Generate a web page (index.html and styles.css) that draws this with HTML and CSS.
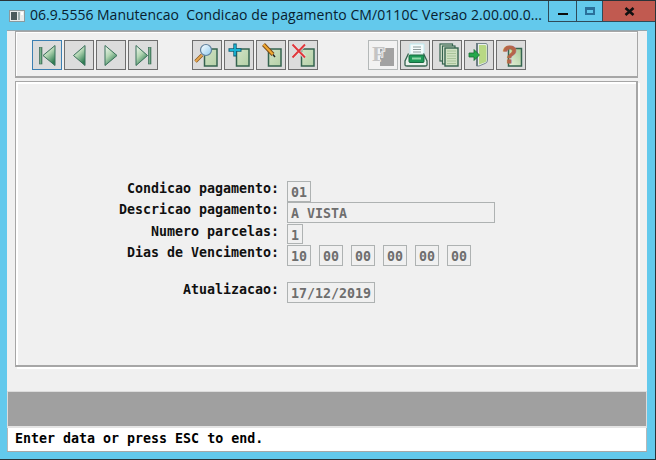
FILE: index.html
```html
<!DOCTYPE html>
<html lang="en">
<head>
  <meta charset="UTF-8" />
  <title>Condicao de pagamento</title>
  <link rel="stylesheet" href="styles.css">
</head>
<body>

<div class="window">

  <div class="titlebar">
    <svg class="app-icon" width="16" height="12" viewBox="0 0 16 12">
      <rect x="0.5" y="0.5" width="15" height="11" fill="#e8ecec" stroke="#8a9a9e"/>
      <rect x="2" y="2" width="6" height="8" fill="#4a5a5c"/>
      <rect x="9" y="2" width="2" height="8" fill="#9fb0b0"/>
      <rect x="12" y="2" width="2" height="3" fill="#fff"/>
    </svg>
    <span class="title-text">06.9.5556 Manutencao&nbsp; <span class="title-rest">Condicao de pagamento CM/0110C Versao 2.00.00.0...</span></span>
    <div class="win-btns">
      <div class="win-btn win-min"><span class="min-glyph"></span></div>
      <div class="win-btn win-max"><span class="max-glyph"></span></div>
      <div class="win-btn win-close">
        <svg width="11" height="9" viewBox="0 0 11 9"><path d="M1.5 1 L9.5 8 M9.5 1 L1.5 8" stroke="#111" stroke-width="2.6"/></svg>
      </div>
    </div>
  </div>

  <div class="client">
    <div class="work">

      <div class="toolbar">
        <div class="btn-group">
          <button class="tool-btn focus">
            <svg width="28" height="28" viewBox="1 1 28 28">
              <defs>
                <linearGradient id="gLeft" x1="0" y1="0" x2="0.6" y2="1">
                  <stop offset="0" stop-color="#f4f8f2"/>
                  <stop offset="0.5" stop-color="#b4d6b4"/>
                  <stop offset="1" stop-color="#2f7d52"/>
                </linearGradient>
                <linearGradient id="gBar" x1="0" y1="0" x2="1" y2="0">
                  <stop offset="0" stop-color="#2b6e4c"/>
                  <stop offset="0.5" stop-color="#8cc09a"/>
                  <stop offset="1" stop-color="#2b6e4c"/>
                </linearGradient>
                <linearGradient id="gSquare" x1="0" y1="0" x2="1" y2="1">
                  <stop offset="0" stop-color="#d2e2c6"/>
                  <stop offset="1" stop-color="#b4d0a6"/>
                </linearGradient>
                <linearGradient id="gLens" x1="0" y1="0" x2="1" y2="1">
                  <stop offset="0" stop-color="#ffffff"/>
                  <stop offset="1" stop-color="#8ecbf0"/>
                </linearGradient>
                <linearGradient id="gHelp" x1="0" y1="1" x2="1" y2="0">
                  <stop offset="0" stop-color="#e8f0dc"/>
                  <stop offset="1" stop-color="#a6cc96"/>
                </linearGradient>
              </defs>
              <rect x="7.5" y="7.5" width="2.5" height="16.5" fill="url(#gBar)" stroke="#3a6a55" stroke-width="0.6"/>
              <path d="M23 5.5 L11 15.5 L23 25.5 Z" fill="url(#gLeft)" stroke="#39705a"/>
            </svg>
          </button>
          <button class="tool-btn">
            <svg width="28" height="28" viewBox="1 1 28 28"><path d="M21 5.5 L9.5 15.5 L21 25.5 Z" fill="url(#gLeft)" stroke="#39705a"/></svg>
          </button>
          <button class="tool-btn">
            <svg width="28" height="28" viewBox="1 1 28 28"><path d="M9 5.5 L21 15.5 L9 25.5 Z" fill="url(#gLeft)" stroke="#39705a"/></svg>
          </button>
          <button class="tool-btn">
            <svg width="28" height="28" viewBox="1 1 28 28">
              <path d="M8 5.5 L19.5 15.5 L8 25.5 Z" fill="url(#gLeft)" stroke="#39705a"/>
              <rect x="20.5" y="7.5" width="2.5" height="16.5" fill="url(#gBar)" stroke="#3a6a55" stroke-width="0.6"/>
            </svg>
          </button>
        </div>

        <div class="btn-group">
          <button class="tool-btn">
            <svg width="28" height="28" viewBox="1 1 28 28">
              <rect x="12.5" y="9" width="12.5" height="17" fill="url(#gSquare)" stroke="#35634f" stroke-width="1.5"/>
              <path d="M10 15 L3.5 21.5" stroke="#8a5a20" stroke-width="3.4"/>
              <path d="M10 15 L3.5 21.5" stroke="#e8a850" stroke-width="1.8"/>
              <circle cx="14" cy="10" r="5.5" fill="url(#gLens)" stroke="#5f7f9c" stroke-width="1.2"/>
            </svg>
          </button>
          <button class="tool-btn">
            <svg width="28" height="28" viewBox="1 1 28 28">
              <rect x="12.5" y="9" width="12.5" height="17" fill="url(#gSquare)" stroke="#35634f" stroke-width="1.5"/>
              <path d="M11 3.5 V16.5 M4.5 10 H17.5" stroke="#0e5f76" stroke-width="3.4"/>
              <path d="M11 4.5 V15.5 M5.5 10 H16.5" stroke="#18b4d4" stroke-width="1.8"/>
            </svg>
          </button>
          <button class="tool-btn">
            <svg width="28" height="28" viewBox="1 1 28 28">
              <rect x="12.5" y="9" width="12.5" height="17" fill="url(#gSquare)" stroke="#35634f" stroke-width="1.5"/>
              <path d="M7.5 4.5 L17 14.5" stroke="#7a4a18" stroke-width="4"/>
              <path d="M7.5 4.5 L17 14.5" stroke="#f0a830" stroke-width="2.2"/>
              <path d="M17 14.5 L19 17" stroke="#222" stroke-width="1.4"/>
            </svg>
          </button>
          <button class="tool-btn">
            <svg width="28" height="28" viewBox="1 1 28 28">
              <rect x="13.5" y="9" width="12.5" height="17" fill="url(#gSquare)" stroke="#35634f" stroke-width="1.5"/>
              <path d="M4.5 4.5 L17 17.5 M17 4.5 L4.5 17.5" stroke="#e8e8e8" stroke-width="3.4"/>
              <path d="M4.5 4.5 L17 17.5 M17 4.5 L4.5 17.5" stroke="#e0383c" stroke-width="2"/>
            </svg>
          </button>
        </div>

        <div class="btn-group">
          <button class="tool-btn disabled">
            <svg width="28" height="28" viewBox="1 1 28 28">
              <rect x="12" y="8" width="14" height="18" fill="#a2a2a2"/>
              <text class="icon-f" x="4" y="21">F</text>
            </svg>
          </button>
          <button class="tool-btn">
            <svg width="28" height="28" viewBox="1 1 28 28">
              <path d="M10 4 H24 V14 H10 Z" fill="#f4fbfb" stroke="#bfeaf0"/>
              <path d="M13 7 H21 M13 9.5 H21 M13 12 H21" stroke="#8a9a9a"/>
              <path d="M8.5 13.5 L5 21 V25 Q5 26 7 26 H25 Q27 26 27 25 V21 L23.5 13.5" fill="#e8f0ea" stroke="#35634f" stroke-width="1.3"/>
              <rect x="9" y="15" width="15" height="7.5" rx="1" fill="#1f9a58" stroke="#176a40"/>
              <rect x="12" y="17.5" width="9" height="2" fill="#8fd8a8"/>
            </svg>
          </button>
          <button class="tool-btn">
            <svg width="28" height="28" viewBox="1 1 28 28">
              <rect x="8" y="4" width="12.5" height="17" fill="#dbe6d2" stroke="#35634f" stroke-width="1.2"/>
              <rect x="10.5" y="6" width="12.5" height="18" fill="#dbe6d2" stroke="#35634f" stroke-width="1.2"/>
              <rect x="13" y="8" width="13" height="18" fill="#cfe0c2" stroke="#35634f" stroke-width="1.4"/>
              <path d="M15 11 H24 M15 13.5 H24 M15 16 H24 M15 18.5 H24 M15 21 H24 M15 23.5 H24" stroke="#a8c49a"/>
            </svg>
          </button>
          <button class="tool-btn">
            <svg width="28" height="28" viewBox="1 1 28 28">
              <path d="M12.5 3.5 H22 Q23.5 3.5 23.5 6 V20 Q23.5 23 21 23.5 L15 26 H12.5 Z" fill="#e8eeee" stroke="#7a8a8e"/>
              <path d="M15 5 H21 Q22.5 5 22.5 7 V20 Q22.5 22 20.5 22.5 L15 24.5 Z" fill="#b8d884"/>
              <path d="M13 3 V26" stroke="#6b7d82" stroke-width="2"/>
              <path d="M5 13 H10 V9.5 L15.5 15 L10 20.5 V17 H5 Z" fill="#25a84a" stroke="#176a30" stroke-width="0.8"/>
            </svg>
          </button>
          <button class="tool-btn">
            <svg width="28" height="28" viewBox="1 1 28 28">
              <rect x="12.5" y="8.5" width="13" height="17.5" fill="url(#gHelp)" stroke="#35634f" stroke-width="1.5"/>
              <text class="icon-help" x="6.5" y="23">?</text>
            </svg>
          </button>
        </div>
      </div>

      <div class="panel">
        <div class="form">
          <div class="form-row">
            <span class="form-label">Condicao pagamento:</span>
            <div class="fields"><span class="field w-2">01</span></div>
          </div>
          <div class="form-row">
            <span class="form-label">Descricao pagamento:</span>
            <div class="fields"><span class="field w-desc">A VISTA</span></div>
          </div>
          <div class="form-row row-num">
            <span class="form-label">Numero parcelas:</span>
            <div class="fields"><span class="field w-1">1</span></div>
          </div>
          <div class="form-row row-dias">
            <span class="form-label">Dias de Vencimento:</span>
            <div class="fields">
              <span class="field w-2">10</span>
              <span class="field w-2">00</span>
              <span class="field w-2">00</span>
              <span class="field w-2">00</span>
              <span class="field w-2">00</span>
              <span class="field w-2">00</span>
            </div>
          </div>
          <div class="form-row row-date">
            <span class="form-label">Atualizacao:</span>
            <div class="fields"><span class="field w-date">17/12/2019</span></div>
          </div>
        </div>
      </div>

    </div>
    <div class="msg-bar"></div>
    <div class="status-bar">Enter data or press ESC to end.</div>
  </div>

</div>

</body>
</html>
```

FILE: styles.css
```css
html, body {
  margin: 0;
  padding: 0;
}

.window {
  width: 656px;
  height: 460px;
  box-sizing: border-box;
  background: #63c9ec;
  border-top: 1px solid #2a3338;
  border-bottom: 1px solid #2a3338;
  border-right: 1px solid #2a3338;
  display: flex;
  flex-direction: column;
  overflow: hidden;
}

/* title bar */
.titlebar {
  height: 29px;
  flex-shrink: 0;
  display: flex;
  align-items: flex-start;
}

.app-icon {
  margin: 9px 0 0 9px;
}

.title-text {
  margin: 4px 0 0 5px;
  font-family: "Open Sans", sans-serif;
  font-size: 14px;
  line-height: 20px;
  color: #08202e;
  white-space: nowrap;
  width: 518px;
}

.title-rest {
  letter-spacing: 0.07px;
}

.win-btns {
  margin-left: auto;
  display: flex;
  height: 21px;
  border: 1px solid #2f4a58;
  border-top: none;
  border-right: none;
  box-sizing: border-box;
}

.win-btn {
  display: flex;
  align-items: center;
  justify-content: center;
  box-sizing: border-box;
  height: 100%;
}

.win-min { width: 28px; border-right: 1px solid #2f4a58; }
.win-max { width: 26px; border-right: 1px solid #2f4a58; }
.win-close { width: 52px; background: #c15a50; }

.min-glyph {
  width: 10px;
  height: 2px;
  background: #0c0c0c;
  margin-top: 5px;
}

.max-glyph {
  width: 6px;
  height: 3px;
  border: 2px solid #2a6f9a;
  border-top-width: 3px;
}

/* window body */
.client {
  flex: 1;
  margin: 0 8px 7px 7px;
  display: flex;
  flex-direction: column;
  background: #f0f0f0;
  border-top: 1px solid #93a7b0;
  border-bottom: 1px solid #a8a8a8;
}

.work {
  height: 360px;
  flex-shrink: 0;
  padding: 0 9px 0 8px;
  box-sizing: border-box;
}

.toolbar {
  height: 47px;
  box-sizing: border-box;
  border: 1px solid #a6a6a6;
  border-bottom: 2px solid #a6a6a6;
  box-shadow: inset 1px 1px 0 #fff;
  display: flex;
  padding: 8px 0 0 16px;
}

.btn-group {
  display: flex;
  gap: 2px;
  margin-right: 34px;
}

.btn-group + .btn-group + .btn-group {
  margin-left: 16px;
}

.tool-btn {
  width: 30px;
  height: 30px;
  padding: 0;
  box-sizing: border-box;
  background: #dcdcdc;
  border: 1px solid #6e6e6e;
  display: flex;
  align-items: center;
  justify-content: center;
}

.tool-btn.focus {
  border-color: #3c7fb1;
}

.tool-btn.disabled {
  background: #f2f2f2;
  border-color: #b4b8b8;
}

.icon-f {
  font-family: "Liberation Serif", serif;
  font-weight: bold;
  font-size: 22px;
  fill: #c4c4c4;
  stroke: #f2f2f2;
  stroke-width: 1.6px;
  paint-order: stroke;
}

.icon-help {
  font-family: "Liberation Sans", sans-serif;
  font-weight: bold;
  font-size: 24px;
  fill: #b5654a;
  stroke: #b5654a;
  stroke-width: 0.8px;
}

/* form panel */
.panel {
  height: 286px;
  margin-top: 3px;
  box-sizing: border-box;
  border: 1px solid #a6a6a6;
  border-right: 2px solid #a6a6a6;
  border-bottom: 2px solid #a6a6a6;
  box-shadow: inset 2px 2px 0 #fff, 2px 2px 0 #fff;
  padding-top: 99px;
}

.form {
  font-family: "DejaVu Sans Mono", monospace;
  font-weight: bold;
  font-size: 13.3px;
}

.form-row {
  display: flex;
  height: 21px;
  gap: 8px;
}

.form-row.row-num {
  height: 20px;
  margin-top: 1px;
}

.form-row.row-dias {
  margin-top: 1px;
}

.form-row.row-date {
  margin-top: 16px;
}

.form-label {
  width: 263px;
  text-align: right;
  line-height: 16px;
  color: #101010;
  white-space: pre;
}

.fields {
  display: flex;
  gap: 8px;
}

.field {
  height: 100%;
  box-sizing: border-box;
  border: 1px solid #aeb2b2;
  color: #6e6e6e;
  padding: 0 0 0 3px;
  line-height: 21px;
  white-space: pre;
}

.w-1 { width: 16px; }
.w-2 { width: 24px; }
.w-date { width: 88px; }
.w-desc { width: 208px; }

/* bottom bars */
.msg-bar {
  height: 37px;
  flex-shrink: 0;
  background: #a0a0a0;
  border: 1px solid #dcdcdc;
  border-bottom: 2px solid #e4e4e4;
  box-sizing: border-box;
}

.status-bar {
  flex: 1;
  background: #fff;
  padding-left: 7px;
  border-left: 1px solid #b8b8b8;
  border-right: 1px solid #b8b8b8;
  font-family: "DejaVu Sans Mono", monospace;
  font-weight: bold;
  font-size: 13.3px;
  line-height: 22px;
  color: #000;
}
```
